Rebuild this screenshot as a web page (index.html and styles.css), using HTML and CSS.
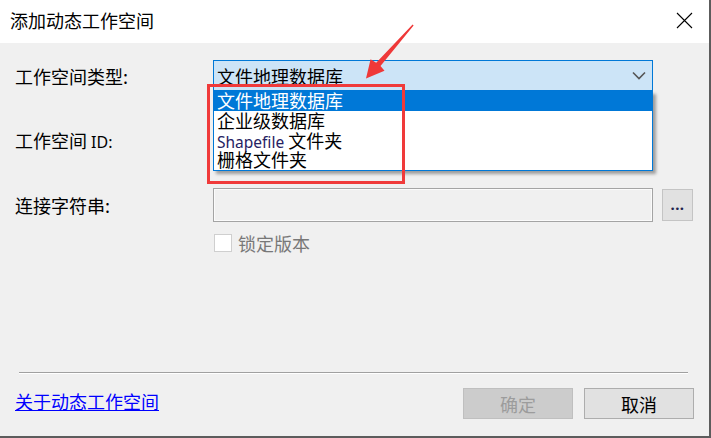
FILE: index.html
```html
<!DOCTYPE html>
<html lang="zh-CN">
<head>
<meta charset="utf-8">
<title>添加动态工作空间</title>
<link rel="stylesheet" href="styles.css">
</head>
<body>
<div class="window">
  <div class="titlebar">
    <span class="title">添加动态工作空间</span>
    <svg class="close" width="17" height="17" viewBox="0 0 17 17">
      <path d="M1 1 L16 16 M16 1 L1 16" stroke="#000" stroke-width="1.1" fill="none"/>
    </svg>
  </div>
  <div class="content">
    <div class="row row-type">
      <span class="label">工作空间类型:</span>
      <div class="combo">
        <span class="combo-text">文件地理数据库</span>
        <svg class="chevron" width="14" height="9" viewBox="0 0 14 9">
          <path d="M1 1.5 L7 7.5 L13 1.5" stroke="#555" stroke-width="1.6" fill="none"/>
        </svg>
      </div>
    </div>
    <div class="row row-id">
      <span class="label">工作空间 <span class="latin-label">ID:</span></span>
    </div>
    <div class="row row-conn">
      <span class="label">连接字符串:</span>
      <div class="textbox"></div>
      <button class="browse">...</button>
    </div>
    <div class="row row-lock">
      <span class="checkbox"></span>
      <span class="lock-text">锁定版本</span>
    </div>
    <div class="separator"></div>
    <div class="footer">
      <a class="link" href="#">关于动态工作空间</a>
      <div class="buttons">
        <button class="btn btn-disabled">确定</button>
        <button class="btn">取消</button>
      </div>
    </div>
  </div>

  <ul class="dropdown">
    <li class="item selected">文件地理数据库</li>
    <li class="item">企业级数据库</li>
    <li class="item"><span class="latin">Shapefile</span> 文件夹</li>
    <li class="item">栅格文件夹</li>
  </ul>

  <div class="annot-box"></div>
  <svg class="annot-arrow" width="709" height="436" viewBox="0 0 709 436">
    <polygon points="413.6,25.4 380.5,66 384.5,70.8 366,78.5 370.6,59.2 376.2,62.8 412.6,24.6" fill="#ef3838"/>
  </svg>
</div>
</body>
</html>
```

FILE: styles.css
```css
* {
  box-sizing: border-box;
}

html,
body {
  margin: 0;
  padding: 0;
}

body {
  width: 711px;
  height: 438px;
  overflow: hidden;
  background: #f0f0f0;
  color: #000;
  font-family: "Noto Sans CJK SC", "Noto Sans", sans-serif;
  font-size: 18px;
}

.window {
  position: relative;
  width: 711px;
  height: 438px;
  background: #f0f0f0;
  border-right: 2px solid #5c5c5c;
  border-bottom: 2px solid #5c5c5c;
  display: flex;
  flex-direction: column;
}

.titlebar {
  height: 43px;
  flex: none;
  background: #fff;
  display: flex;
  align-items: flex-start;
  padding: 8px 16px 0 10px;
}

.title {
  font-size: 18px;
  line-height: 24px;
}

.close {
  margin-left: auto;
  margin-top: 4px;
}

.content {
  padding: 0 15px;
  display: flex;
  flex-direction: column;
}

.row {
  display: flex;
  align-items: center;
}

.label {
  width: 198px;
  flex: none;
  line-height: 24px;
  white-space: nowrap;
}

.latin-label {
  font-family: "Noto Sans", sans-serif;
  font-size: 16px;
}

.row-type {
  margin-top: 17px;
  height: 31px;
}

.combo {
  width: 440px;
  height: 31px;
  background: #cce4f7;
  border: 1px solid #0078d7;
  display: flex;
  align-items: center;
  padding: 0 6px 0 3px;
}

.combo-text {
  line-height: 24px;
}

.chevron {
  margin-left: auto;
}

.row-id {
  margin-top: 34px;
  height: 32px;
}

.row-conn {
  margin-top: 31px;
  height: 34px;
}

.textbox {
  width: 440px;
  height: 34px;
  background: #f0f0f0;
  border: 1px solid #a4a4a4;
  box-shadow: inset 1px 1px 0 #fbfbfb, inset -1px -1px 0 #fbfbfb;
}

.browse {
  margin-left: 9px;
  width: 31px;
  height: 32px;
  padding: 0 0 2px 0;
  background: #e1e1e1;
  border: 1px solid #c4c4c4;
  font-family: "Noto Sans", sans-serif;
  font-size: 15px;
  font-weight: bold;
  line-height: 28px;
  color: #23234d;
  display: flex;
  align-items: flex-end;
  justify-content: center;
  letter-spacing: 0.5px;
}

.row-lock {
  margin-top: 11px;
  height: 19px;
  padding-left: 199px;
}

.checkbox {
  width: 18px;
  height: 18px;
  background: #fff;
  border: 1px solid #cfcfcf;
}

.lock-text {
  margin-left: 6px;
  line-height: 22px;
  color: #787878;
}

.separator {
  margin: 120px 6px 0 4px;
  height: 2px;
  border-top: 1px solid #a0a0a0;
  border-bottom: 1px solid #fff;
}

.footer {
  margin-top: 14px;
  height: 31px;
  display: flex;
  justify-content: space-between;
  align-items: flex-start;
}

.link {
  margin-top: 3px;
  line-height: 20px;
  color: #0000ff;
  text-decoration: underline;
}

.buttons {
  display: flex;
  gap: 11px;
}

.btn {
  width: 110px;
  height: 31px;
  padding: 0;
  background: #e1e1e1;
  border: 1px solid #adadad;
  font-family: "Noto Sans CJK SC", sans-serif;
  font-size: 18px;
  line-height: 24px;
  color: #000;
}

.btn-disabled {
  background: #cccccc;
  border-color: #bfbfbf;
  color: #9c9c9c;
}

.dropdown {
  position: absolute;
  left: 213px;
  top: 91px;
  width: 440px;
  height: 80px;
  margin: 0;
  padding: 0;
  list-style: none;
  background: #fff;
  border: 1px solid #0078d7;
  border-top: none;
  box-shadow: 3px 3px 3px rgba(0, 0, 0, 0.35);
}

.item {
  height: 19.75px;
  line-height: 19.75px;
  padding-left: 3px;
  white-space: nowrap;
}

.item.selected {
  background: #0078d7;
  color: #fff;
}

.latin {
  font-family: "Noto Sans", sans-serif;
  font-size: 15.5px;
  color: #262262;
}

.annot-box {
  position: absolute;
  left: 207px;
  top: 84px;
  width: 198px;
  height: 100px;
  border: 3px solid #f03a3a;
}

.annot-arrow {
  position: absolute;
  left: 0;
  top: 0;
  pointer-events: none;
}
```
